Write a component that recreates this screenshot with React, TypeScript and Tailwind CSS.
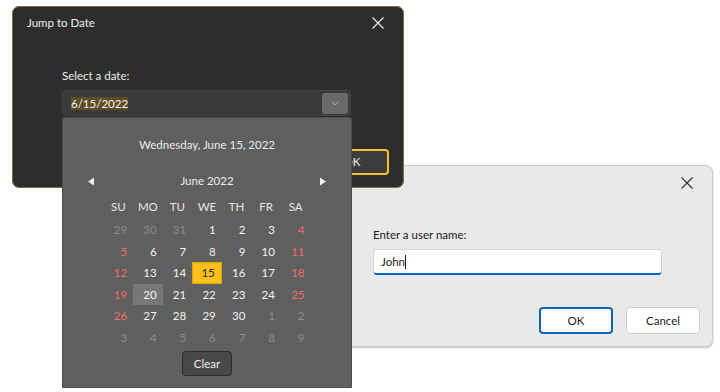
import React from 'react';

type Day = { n: number; other?: boolean };

const weeks: Day[][] = [
  [{ n: 29, other: true }, { n: 30, other: true }, { n: 31, other: true }, { n: 1 }, { n: 2 }, { n: 3 }, { n: 4 }],
  [5, 6, 7, 8, 9, 10, 11].map((n) => ({ n })),
  [12, 13, 14, 15, 16, 17, 18].map((n) => ({ n })),
  [19, 20, 21, 22, 23, 24, 25].map((n) => ({ n })),
  [{ n: 26 }, { n: 27 }, { n: 28 }, { n: 29 }, { n: 30 }, { n: 1, other: true }, { n: 2, other: true }],
  [3, 4, 5, 6, 7, 8, 9].map((n) => ({ n, other: true })),
];

const dayNames = ['SU', 'MO', 'TU', 'WE', 'TH', 'FR', 'SA'];

const CloseIcon = ({ className }: { className?: string }) => (
  <svg width="12" height="12" viewBox="0 0 12 12" className={className}>
    <path d="M0.5 0.5 L11.5 11.5 M11.5 0.5 L0.5 11.5" stroke="currentColor" strokeWidth="1.1" fill="none" />
  </svg>
);

const Calendar = () => (
  <div className="absolute left-[62px] top-[117px] w-[290px] h-[271px] bg-[#5f5f5f] border border-[#4c4c4c] rounded-t-[3px] flex flex-col text-[11.5px]">
    <div className="h-[53px] flex items-center justify-center text-[#ececec]">
      Wednesday, June 15, 2022
    </div>
    <div className="h-[20px] flex items-center justify-between px-[24px] text-[#ececec]">
      <svg width="8" height="9" viewBox="0 0 8 9">
        <path d="M7 0.5 L7 8.5 L1 4.5 Z" fill="#f2f2f2" />
      </svg>
      <span>June 2022</span>
      <svg width="8" height="9" viewBox="0 0 8 9">
        <path d="M1 0.5 L1 8.5 L7 4.5 Z" fill="#f2f2f2" />
      </svg>
    </div>
    <div className="mt-[4px] mx-auto w-[207px] grid grid-cols-7 h-[24px] items-center text-[#e6e6e6]">
      {dayNames.map((d) => (
        <div key={d} className="text-center">{d}</div>
      ))}
    </div>
    <div className="mx-auto w-[207px] grid grid-cols-7 auto-rows-[21.5px]">
      {weeks.map((week, wi) =>
        week.map((d, di) => {
          const weekend = di === 0 || di === 6;
          const today = !d.other && d.n === 15;
          const hover = !d.other && d.n === 20;
          let cls = 'text-[#f4f4f4]';
          if (d.other) cls = 'text-[#8d8d8d]';
          else if (today) cls = 'bg-[#fdc01b] text-[#2a2a2a] border border-[#d9a300]';
          else if (weekend) cls = 'text-[#f26a6a]';
          if (hover) cls = 'bg-[#777777] text-[#f4f4f4]';
          return (
            <div key={`${wi}-${di}`} className={`flex items-center justify-end pr-[6px] ${cls}`}>
              {d.n}
            </div>
          );
        })
      )}
    </div>
    <div className="mt-[3px] flex justify-center">
      <button className="w-[50px] h-[25px] rounded-[4px] bg-[#484848] border border-[#2c2c2c] text-[#ececec]">
        Clear
      </button>
    </div>
  </div>
);

const DarkDialog = () => (
  <div className="absolute left-[12px] top-[6px] w-[392px] h-[182px] bg-[#2d2d2d] border border-[#7d6d4f] rounded-[7px] flex flex-col text-[11.5px] text-[#ececec]">
    <div className="h-[31px] flex items-center justify-between pl-[14px] pr-[19px]">
      <span>Jump to Date</span>
      <CloseIcon className="text-[#f0f0f0]" />
    </div>
    <div className="pl-[49px] pr-[52px] flex flex-col">
      <div className="mt-[30px] h-[16px] flex items-center">Select a date:</div>
      <div className="mt-[6px] h-[26px] rounded-[4px] bg-[#3a3a3a] border border-[#444444] flex items-center pl-[8px] pr-[2px]">
        <span className="bg-[#5e4c24] leading-[13px] h-[13px] text-[#f4f4f4]">6/15/2022</span>
        <div className="ml-auto w-[26px] h-[21px] rounded-[3px] bg-[#6a6a6a] flex items-center justify-center">
          <svg width="8" height="5" viewBox="0 0 8 5">
            <path d="M0.5 0.5 L4 4 L7.5 0.5" stroke="#a8a8a8" strokeWidth="1" fill="none" />
          </svg>
        </div>
      </div>
    </div>
    <div className="mt-auto mb-[12px] pr-[14px] flex justify-end gap-[12px]">
      <button className="w-[74px] h-[26px] rounded-[4px] bg-[#3d3d3d] border-2 border-[#f6c12a] text-[#ececec]">
        OK
      </button>
    </div>
  </div>
);

const LightDialog = () => (
  <div className="absolute left-[322px] top-[165px] w-[391px] h-[182px] bg-[#e9e9e9] border border-[#cbcbcb] rounded-[7px] shadow-[0_1px_2px_rgba(0,0,0,0.25)] flex flex-col text-[11.5px] text-[#1b1b1b]">
    <div className="h-[33px] flex items-center justify-end pr-[19px]">
      <CloseIcon className="text-[#303030]" />
    </div>
    <div className="pl-[50px] pr-[50px] flex flex-col">
      <div className="mt-[28px] h-[16px] flex items-center">Enter a user name:</div>
      <div className="mt-[6px] h-[26px] rounded-[4px] bg-white border border-[#d4d4d4] border-b-2 border-b-[#0067c0] flex items-center pl-[7px]">
        <span>John</span>
        <span className="w-[1px] h-[14px] bg-[#1b1b1b]" />
      </div>
    </div>
    <div className="mt-auto mb-[12px] pr-[12px] flex justify-end gap-[13px]">
      <button className="w-[74px] h-[27px] rounded-[4px] bg-white border-2 border-[#0f63c0] text-[#1b1b1b]">
        OK
      </button>
      <button className="w-[74px] h-[27px] rounded-[4px] bg-white border border-[#cdcdcd] text-[#1b1b1b]">
        Cancel
      </button>
    </div>
  </div>
);

export default function App() {
  return (
    <div
      className="relative w-[720px] h-[392px] bg-white overflow-hidden"
      style={{ fontFamily: '"Segoe UI", Lato, "Liberation Sans", Arial, sans-serif' }}
    >
      <LightDialog />
      <DarkDialog />
      <Calendar />
    </div>
  );
}
